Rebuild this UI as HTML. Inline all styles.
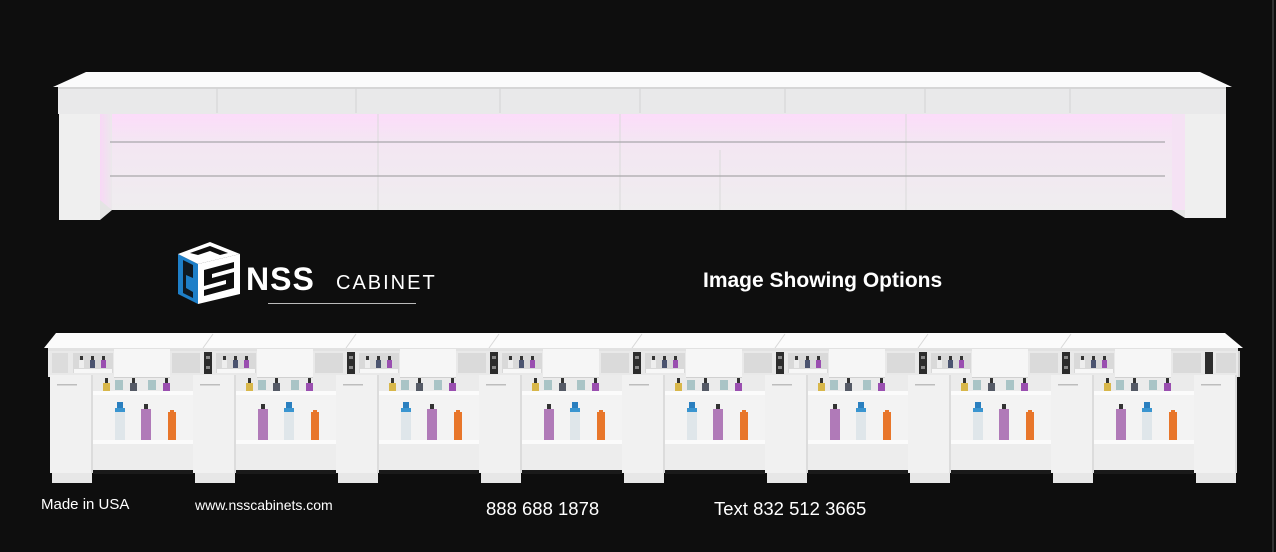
<!DOCTYPE html>
<html><head><meta charset="utf-8">
<style>
html,body{margin:0;padding:0;background:#0e0e0e;}
#c{position:relative;width:1276px;height:552px;overflow:hidden;background:#0e0e0e;font-family:"Liberation Sans",sans-serif;}
.a{position:absolute;}
.t{position:absolute;color:#fff;white-space:nowrap;}
</style></head><body>
<div id="c">
<svg class="a" style="left:0;top:0" width="1276" height="552" viewBox="0 0 1276 552">
<defs>
<linearGradient id="pink" x1="0" y1="0" x2="0" y2="1">
<stop offset="0" stop-color="#fcdcfa"/><stop offset="0.28" stop-color="#f4e6f3"/><stop offset="1" stop-color="#efedef"/>
</linearGradient>
<linearGradient id="side" x1="0" y1="0" x2="1" y2="0">
<stop offset="0" stop-color="#f8d8f6"/><stop offset="1" stop-color="#ece8ec"/>
</linearGradient>
</defs>
<line x1="1273" y1="0" x2="1273" y2="552" stroke="#555" stroke-width="1"/>
<polygon points="86,72 1200,72 1232,87 53,87" fill="#fbfbfb"/>
<rect x="58" y="87" width="1168" height="27" fill="#e9e9ea"/>
<rect x="58" y="87" width="1168" height="2" fill="#d6d6d6"/>
<g stroke="#d4d4d4" stroke-width="1">
<line x1="217" y1="88" x2="217" y2="113"/><line x1="356" y1="88" x2="356" y2="113"/><line x1="500" y1="88" x2="500" y2="113"/><line x1="640" y1="88" x2="640" y2="113"/><line x1="785" y1="88" x2="785" y2="113"/><line x1="925" y1="88" x2="925" y2="113"/><line x1="1070" y1="88" x2="1070" y2="113"/>
</g>
<rect x="100" y="114" width="1086" height="96" fill="url(#pink)"/>
<rect x="100" y="114" width="12" height="96" fill="url(#side)"/>
<rect x="1172" y="114" width="14" height="96" fill="#f5e2f4"/>
<g stroke="#dadada"><line x1="378" y1="114" x2="378" y2="210"/><line x1="620" y1="114" x2="620" y2="210"/><line x1="720" y1="150" x2="720" y2="210"/><line x1="906" y1="114" x2="906" y2="210"/></g>
<line x1="110" y1="142" x2="1165" y2="142" stroke="#a9a7aa" stroke-width="1.2"/>
<line x1="110" y1="176" x2="1165" y2="176" stroke="#a9a7aa" stroke-width="1.2"/>
<rect x="59" y="114" width="41" height="106" fill="#efefef"/>
<polygon points="100,200 112,210 100,220" fill="#e4e4e4"/>
<rect x="1185" y="114" width="41" height="104" fill="#efefef"/>
<polygon points="1172,210 1185,210 1185,218" fill="#e4e4e4"/>
<g id="bot"></g>
</svg>

<svg class="a" style="left:176px;top:240px" width="68" height="66" viewBox="0 0 68 66">
<polygon points="2,14 22,24 22,64 2,54" fill="#1e7fc8"/>
<polygon points="22,24 64,14 64,54 22,64" fill="#fff"/>
<polygon points="2,14 34,2 64,14 22,24" fill="#fff"/>
<path d="M7,20 L17,25 L17,38 L10,35 L10,48 L17,52 L17,58 L7,53 Z" fill="#0e0e0e" opacity="0.9"/>
<path d="M28,30 L58,22 L58,28 L36,34 L36,38 L58,32 L58,48 L28,56 L28,50 L50,44 L50,40 L28,46 Z" fill="#0e0e0e"/>
<path d="M14,13 L34,6 L52,13 L44,15 L34,11 L22,15 Z" fill="#0e0e0e"/>
</svg>
<div class="t" style="left:246px;top:261px;font-size:32px;font-weight:bold;letter-spacing:1px;line-height:36px">NSS</div>
<div class="t" style="left:336px;top:271px;font-size:20px;letter-spacing:2px;line-height:24px">CABINET</div>
<div class="a" style="left:268px;top:303px;width:148px;height:1px;background:#bbb"></div>

<div class="t" style="left:703px;top:267px;font-size:21px;font-weight:bold;line-height:28px">Image Showing Options</div>

<div class="t" style="left:41px;top:496px;font-size:15px;line-height:18px">Made in USA</div>
<div class="t" style="left:195px;top:496px;font-size:14px;line-height:18px">www.nsscabinets.com</div>
<div class="t" style="left:486px;top:498px;font-size:18.5px;line-height:22px">888 688 1878</div>
<div class="t" style="left:714px;top:498px;font-size:18.5px;line-height:22px">Text 832 512 3665</div>
</div>
<script>
var g=document.getElementById('bot'),s='';
function r(x,y,w,h,f){s+='<rect x="'+x+'" y="'+y+'" width="'+w+'" height="'+h+'" fill="'+f+'"/>';}
s+='<polygon points="56,333 1225,333 1243,348 44,348" fill="#fbfbfb"/>';
s+='<g stroke="#d8d8d8">';
for(var k=1;k<8;k++){var x=50+143*k+20;s+='<line x1="'+x+'" y1="334" x2="'+(x-10)+'" y2="348"/>';}
s+='</g>';
r(48,348,1190,3,'#e2e2e2');
r(48,351,1190,26,'#e9e9e9');
var cols=['#d8b74a','#555a66','#9a4fb0','#a9c8cc'];
for(var k=0;k<9;k++){
 var d=50+143*k;
 if(k<8){
  var bx=d+43,bw=100;
  r(bx,375,bw,97,'#f3f3f3');
  r(bx,375,bw,17,'#ebebeb');
  r(bx,391,bw,4,'#fbfbfb');
  r(bx,440,bw,4,'#fbfbfb');
  r(bx,444,bw,26,'#ededed');
  r(bx,470,bw,4,'#1a1a1a');
  var px=[bx+10,bx+22,bx+37,bx+55,bx+70];
  for(var i=0;i<5;i++){var c=i==1||i==3?'#a9c4c6':(i==0?cols[0]:(i==2?cols[1]:cols[2]));
   if(i==1||i==3) r(px[i],380,8,10,c); else {r(px[i]+2,378,3,5,'#333');r(px[i],383,7,8,c);}}
  var o=k%2==0?[0,1,2]:[1,0,2];
  for(var j=0;j<3;j++){var x=bx+22+j*26,t=o[j];
   if(t==0){r(x+2,402,6,6,'#2a7fbf');r(x,408,10,4,'#3a95d0');r(x,412,10,28,'#dfe6ea');}
   else if(t==1){r(x+3,404,4,5,'#333');r(x,409,10,31,'#b07ab8');}
   else{r(x+1,412,8,28,'#e8762a');r(x+3,410,4,3,'#e8762a');}
  }
 }
 r(d,375,43,98,'#f1f1f1');
 r(d+41,375,2,98,'#dcdcdc');
 r(d+7,384,20,1.5,'#bdbdbd');
 r(d+2,473,40,10,'#e7e7e7');
 if(k<8){
  if(k==0){r(d+2,353,16,20,'#dcdcdc');}
  else{r(d+11,352,8,22,'#2c2c2c');r(d+13,356,4,3,'#888');r(d+13,366,4,3,'#888');}
  r(d+23,353,40,20,'#d9d9d9');r(d+24,369,38,4,'#f7f7f7');
  for(var i=0;i<3;i++){r(d+30+i*11,356,3,4,'#333');r(d+29+i*11,360,5,8,i==2?'#9a4fb0':(i==1?'#4b5470':'#eee'));}
  r(d+64,349,56,29,'#f6f6f6');r(d+64,377,56,1,'#d0d0d0');
  r(d+122,353,28,20,'#dadada');
 } else {
  r(d+11,352,8,22,'#2c2c2c');r(d+22,353,20,20,'#dadada');
 }
}
r(1238,351,2,26,'#cfcfcf');
g.innerHTML=s;
</script>
</body></html>
